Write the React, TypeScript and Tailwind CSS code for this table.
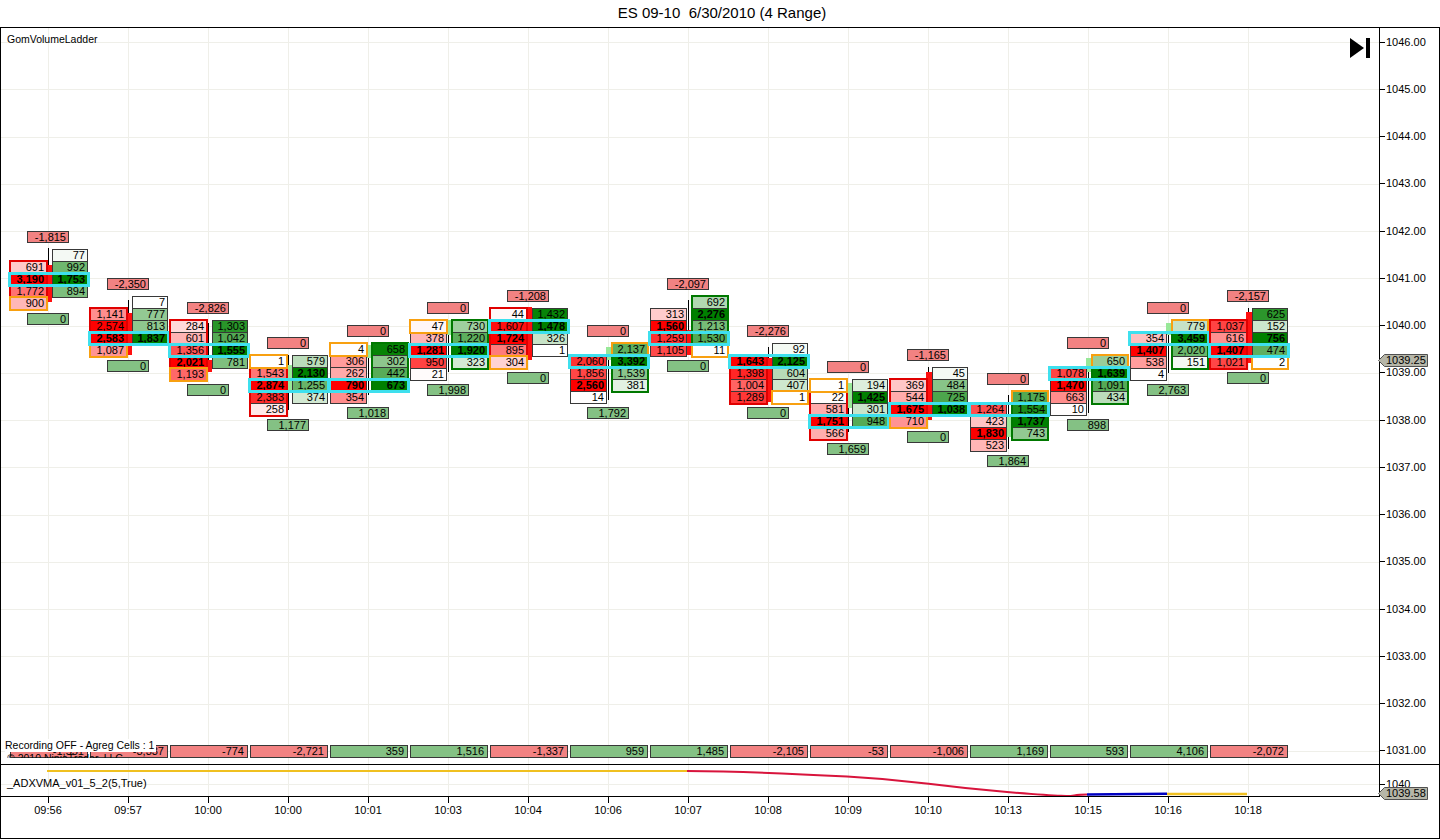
import React from "react";

type Cell = number | null;

type Bar = {
  time: string;
  top: number;
  rows: [Cell, Cell][];
  poc: number;
  close: [number, 0 | 1];
  side: 0 | 1;
  above: number;
  below: number;
  strip: number;
  // page y: wick top, wick bottom, body top, body bottom, up
  candle: [number, number, number, number, boolean];
};

const PX = 47.267;
// local y (main plot starts at page y 28) of a price
const yOf = (p: number) => 42 + (1046 - p) * PX - 28;
const rt = (p: number) => Math.round(yOf(p) - 5.9);
const fmt = (n: number) => n.toLocaleString("en-US");

const bars: Bar[] = [
  { time: "09:56", top: 1041.5, rows: [[null, 77], [691, 992], [3190, 1753], [1772, 894], [900, null]], poc: 2, close: [4, 0], side: 0, above: -1815, below: 0, strip: -1551, candle: [248, 302, 265, 302, false] },
  { time: "09:57", top: 1040.5, rows: [[null, 7], [1141, 777], [2574, 813], [2583, 1837], [1087, null]], poc: 3, close: [4, 0], side: 0, above: -2350, below: 0, strip: -3337, candle: [300, 355, 313, 355, false] },
  { time: "10:00", top: 1040.0, rows: [[284, 1303], [601, 1042], [1356, 1555], [2021, 781], [1193, null]], poc: 2, close: [4, 0], side: 0, above: -2826, below: 0, strip: -774, candle: [323, 372, 360, 372, false] },
  { time: "10:00", top: 1039.25, rows: [[1, 579], [1543, 2130], [2874, 1255], [2383, 374], [258, null]], poc: 2, close: [0, 0], side: 0, above: 0, below: 1177, strip: -2721, candle: [355, 410, 365, 390, true] },
  { time: "10:01", top: 1039.5, rows: [[4, 658], [306, 302], [262, 442], [790, 673], [354, null]], poc: 3, close: [0, 0], side: 1, above: 0, below: 1018, strip: 359, candle: [345, 395, 345, 358, true] },
  { time: "10:03", top: 1040.0, rows: [[47, 730], [378, 1220], [1281, 1920], [950, 323], [21, null]], poc: 2, close: [0, 0], side: 1, above: 0, below: 1998, strip: 1516, candle: [320, 372, 320, 335, true] },
  { time: "10:04", top: 1040.25, rows: [[44, 1432], [1607, 1478], [1724, 326], [895, 1], [304, null]], poc: 1, close: [4, 0], side: 0, above: -1208, below: 0, strip: -1337, candle: [307, 360, 307, 360, false] },
  { time: "10:06", top: 1039.5, rows: [[null, 2137], [2060, 3392], [1856, 1539], [2560, 381], [14, null]], poc: 1, close: [0, 1], side: 1, above: 0, below: 1792, strip: 959, candle: [347, 400, 347, 360, true] },
  { time: "10:07", top: 1040.5, rows: [[null, 692], [313, 2276], [1560, 1213], [1259, 1530], [1105, 11]], poc: 3, close: [4, 1], side: 1, above: -2097, below: 0, strip: 1485, candle: [300, 355, 330, 355, false] },
  { time: "10:08", top: 1039.5, rows: [[null, 92], [1643, 2125], [1398, 604], [1004, 407], [1289, 1]], poc: 1, close: [4, 1], side: 0, above: -2276, below: 0, strip: -2105, candle: [347, 402, 358, 402, false] },
  { time: "10:09", top: 1038.75, rows: [[1, 194], [22, 1425], [581, 301], [1751, 948], [566, null]], poc: 3, close: [0, 0], side: 0, above: 0, below: 1659, strip: -53, candle: [383, 432, 383, 408, true] },
  { time: "10:10", top: 1039.0, rows: [[null, 45], [369, 484], [544, 725], [1675, 1038], [710, null]], poc: 3, close: [4, 0], side: 0, above: -1165, below: 0, strip: -1006, candle: [367, 420, 372, 420, false] },
  { time: "10:13", top: 1038.5, rows: [[null, 1175], [1264, 1554], [423, 1737], [1830, 743], [523, null]], poc: 1, close: [0, 1], side: 1, above: 0, below: 1864, strip: 1169, candle: [395, 449, 415, 437, true] },
  { time: "10:15", top: 1039.25, rows: [[null, 650], [1078, 1639], [1470, 1091], [663, 434], [10, null]], poc: 1, close: [0, 1], side: 1, above: 0, below: 898, strip: 593, candle: [358, 413, 358, 372, true] },
  { time: "10:16", top: 1040.0, rows: [[null, 779], [354, 3459], [1407, 2020], [538, 151], [4, null]], poc: 1, close: [0, 1], side: 1, above: 0, below: 2763, strip: 4106, candle: [323, 373, 323, 335, true] },
  { time: "10:18", top: 1040.25, rows: [[null, 625], [1037, 152], [616, 756], [1407, 474], [1021, 2]], poc: 3, close: [4, 1], side: 0, above: -2157, below: 0, strip: -2072, candle: [308, 363, 312, 363, false] },
];

const prices = Array.from({ length: 16 }, (_, k) => 1046 - k);

const ROW = 12; // row pitch inside a ladder
const COLX = [0, 42];
const COLW = [37, 36];

function bidBg(t: number) {
  const g = Math.round(255 * (1 - t));
  return `rgb(255, ${g}, ${g})`;
}

function askBg(t: number) {
  const r = Math.round(255 * (1 - t));
  return `rgb(${r}, ${Math.round(255 - 127 * t)}, ${r})`;
}

function Ladder({ b, i }: { b: Bar; i: number }) {
  const cx = 47 + 80 * i;
  const top = rt(b.top); // local y of first row
  const maxes = [0, 1].map((s) => Math.max(...b.rows.map((r) => r[s] ?? 0)));

  const sideRows = b.rows.map((r, k) => (r[b.side] !== null ? k : -1)).filter((k) => k >= 0);
  const o0 = sideRows[0];
  const o1 = sideRows[sideRows.length - 1];
  const [ck, cs] = b.close;
  const [wt, wb, bt, bb, up] = b.candle;
  const originY = top - 18; // ladder box starts with the delta label

  // y inside the ladder box for row k
  const ry = (k: number) => 18 + k * ROW;

  return (
    <div className="absolute flex w-[78px] flex-col" style={{ left: cx - 38, top: originY }}>
      {/* candle, behind the cells */}
      <div className="absolute left-[38px] w-px bg-black" style={{ top: wt - 28 - originY, height: wb - wt }} />
      <div
        className={`absolute left-[36px] w-[6px] ${up ? "bg-[#98e898]" : "bg-[#ff1010]"}`}
        style={{ top: bt - 28 - originY, height: bb - bt }}
      />

      <div className="relative ml-[17px] flex h-[12px] w-[42px] items-center justify-end border border-[#383838] bg-[#f28282] pr-[2px] text-[11px] leading-none">
        {fmt(b.above)}
      </div>

      <div className="relative mt-[6px] flex flex-col">
        {b.rows.map((r, k) => (
          <div key={k} className="flex h-[13px] gap-[5px] [&:not(:first-child)]:-mt-px">
            {r.map((v, s) =>
              v === null ? (
                <div key={s} className={s === 0 ? "w-[37px]" : "w-[36px]"} />
              ) : (
                <div
                  key={s}
                  className={`flex items-center justify-end border border-[#383838] pr-[2px] text-[11px] leading-none text-black ${
                    s === 0 ? "w-[37px]" : "w-[36px]"
                  } ${v === maxes[s] ? "font-bold" : ""}`}
                  style={{ background: s === 0 ? bidBg(v / maxes[s]) : askBg(v / maxes[s]) }}
                >
                  {fmt(v)}
                </div>
              )
            )}
          </div>
        ))}
      </div>

      <div className="relative ml-[17px] mt-[3px] flex h-[12px] w-[42px] items-center justify-end border border-[#383838] bg-[#84c184] pr-[2px] text-[11px] leading-none">
        {fmt(b.below)}
      </div>

      {/* column outline */}
      <div
        className={`absolute border-2 ${b.side === 0 ? "border-[#e00000]" : "border-[#007800]"}`}
        style={{
          left: COLX[b.side] - 1,
          top: ry(o0) - 1,
          width: COLW[b.side] + 2,
          height: (o1 - o0 + 1) * ROW + 3,
        }}
      />

      {/* close cell */}
      <div
        className="absolute h-[15px] border-2 border-[#f8a010]"
        style={{ left: COLX[cs] - 1, top: ry(ck) - 1, width: COLW[cs] + 2 }}
      />

      {/* point of control */}
      <div className="absolute -left-[2px] h-[15px] w-[82px] border-[3px] border-[#3ee0ee]" style={{ top: ry(b.poc) - 1 }} />
    </div>
  );
}

function Marker({ top, label }: { top: number; label: string }) {
  return (
    <div className="absolute -left-[2px] z-10 h-[13px] w-[50px]" style={{ top }}>
      <svg width="50" height="13" className="absolute left-0 top-0">
        <polygon points="0.5,6.5 6.5,0.5 49.5,0.5 49.5,12.5 6.5,12.5" fill="#b6b6a8" stroke="#505050" />
      </svg>
      <span className="absolute left-[8px] top-0 text-[11px] leading-[13px] text-black">{label}</span>
    </div>
  );
}

export default function App() {
  return (
    <div className="h-[840px] w-[1440px] overflow-hidden bg-white font-['Liberation_Sans',Arial,sans-serif] text-black">
      {/* title */}
      <div className="flex h-[27px] items-center justify-center whitespace-pre pl-[4px] text-[15px]">
        {"ES 09-10  6/30/2010 (4 Range)"}
      </div>

      <div className="flex h-[812px] flex-col border border-black">
        {/* price panel */}
        <div className="flex h-[737px] border-b border-black">
          <div className="relative w-[1378px] overflow-hidden">
            {prices.map((p) => (
              <div key={p} className="absolute left-0 h-px w-full bg-[#efefe9]" style={{ top: Math.round(yOf(p)) }} />
            ))}
            <div className="absolute inset-0 flex pl-[47px]">
              {bars.map((_, i) => (
                <div key={i} className="h-full w-[80px] shrink-0 border-l border-[#efefe9]" />
              ))}
            </div>

            <div className="absolute left-[6px] top-[6px] text-[10.5px] leading-none">GomVolumeLadder</div>

            <svg width="20" height="20" viewBox="0 0 20 20" className="absolute left-[1349px] top-[10px]">
              <polygon points="0,0 14,10 0,20" fill="#000" />
              <rect x="16" y="0" width="4" height="20" fill="#000" />
            </svg>

            {bars.map((b, i) => (
              <Ladder key={i} b={b} i={i} />
            ))}

            {/* delta strip */}
            <div className="absolute left-[9px] top-[717px] flex gap-[2px]">
              {bars.map((b, i) => (
                <div
                  key={i}
                  className={`flex h-[13px] w-[78px] items-center justify-end border border-[#383838] pr-[3px] text-[11px] leading-none ${
                    b.strip < 0 ? "bg-[#f28282]" : "bg-[#84c184]"
                  }`}
                >
                  {fmt(b.strip)}
                </div>
              ))}
            </div>

            <div className="absolute left-[4px] top-[711px] z-10 flex flex-col">
              <div className="h-[13px] bg-white pr-[2px] text-[10.5px] leading-[13px]">Recording OFF - Agreg Cells : 1</div>
              <div className="ml-[2px] h-[6px] overflow-hidden text-[10.5px] leading-[12px]">© 2010 NinjaTrader, LLC</div>
            </div>
          </div>

          <div className="relative flex-1 border-l border-black">
            <div className="flex flex-col gap-[34.267px] pt-[7.5px]">
              {prices.map((p) => (
                <div key={p} className="flex h-[13px] items-center gap-px">
                  <div className="h-px w-[5px] bg-black" />
                  <div className="text-[11px] leading-[13px]">{`${p}.00`}</div>
                </div>
              ))}
            </div>
            <Marker top={326} label="1039.25" />
          </div>
        </div>

        {/* indicator panel */}
        <div className="flex h-[32px]">
          <div className="relative w-[1378px] overflow-hidden border-b border-black">
            <div className="absolute left-0 top-[19px] h-px w-full bg-[#efefe9]" />
            <div className="absolute inset-0 flex pl-[47px]">
              {bars.map((_, i) => (
                <div key={i} className="h-full w-[80px] shrink-0 border-l border-[#efefe9]" />
              ))}
            </div>
            <div className="absolute left-[6px] top-[12px] text-[11px] leading-[13px]">_ADXVMA_v01_5_2(5,True)</div>
            <svg width="1378" height="31" className="absolute left-0 top-0">
              <path d="M46,6 L686,6" stroke="#f0c020" strokeWidth="2" fill="none" />
              <path
                d="M686,6 C730,6.3 770,7.5 846,11.5 S920,20 1006,27 S1060,29.6 1086,29.6"
                stroke="#d8143c"
                strokeWidth="2"
                fill="none"
              />
              <path d="M1086,29.6 L1166,28.8" stroke="#0000c0" strokeWidth="2.5" fill="none" />
              <path d="M1166,29 L1246,29" stroke="#f0c020" strokeWidth="2.5" fill="none" />
            </svg>
          </div>
          <div className="relative flex-1 border-l border-black">
            <div className="mt-[13px] flex h-[13px] items-center gap-px">
              <div className="h-px w-[5px] bg-black" />
              <div className="text-[11px] leading-[13px]">1040</div>
            </div>
            <Marker top={22} label="1039.58" />
          </div>
        </div>

        {/* time axis */}
        <div className="flex flex-1 pl-[7px]">
          {bars.map((b, i) => (
            <div key={i} className="flex w-[80px] shrink-0 flex-col items-center">
              <div className="h-[6px] w-px bg-black" />
              <div className="mt-px text-[11px] leading-[13px]">{b.time}</div>
            </div>
          ))}
        </div>
      </div>
    </div>
  );
}
